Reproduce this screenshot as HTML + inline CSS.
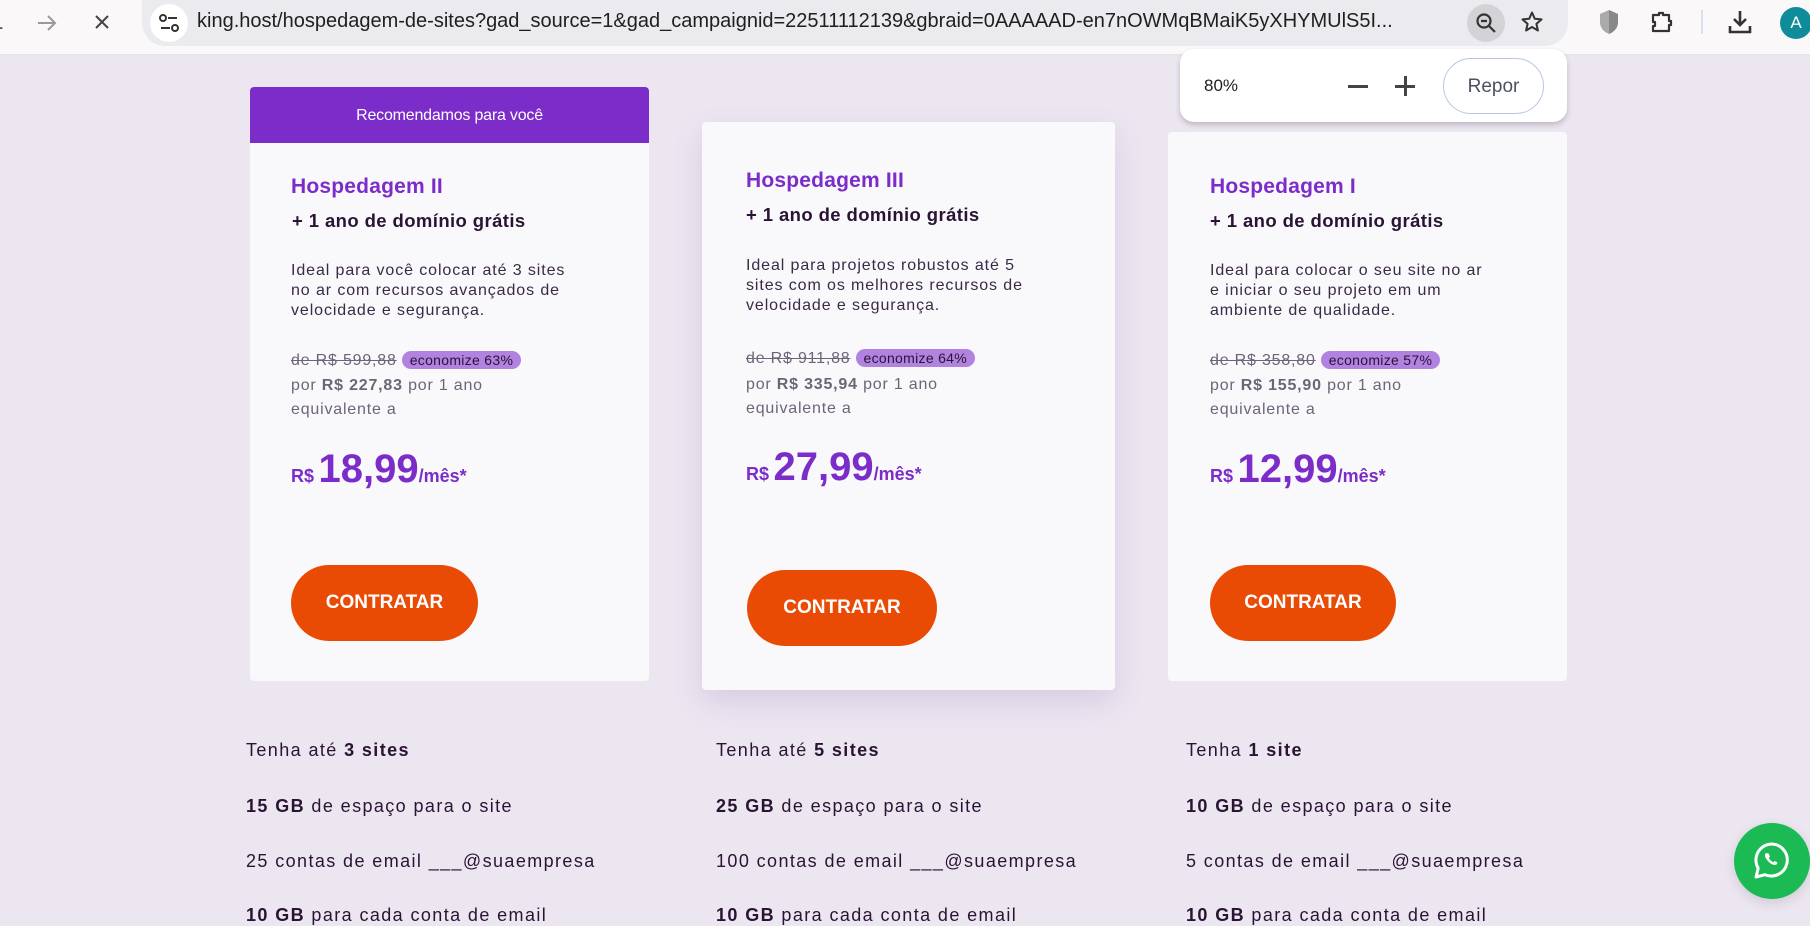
<!DOCTYPE html>
<html><head><meta charset="utf-8"><style>
*{margin:0;padding:0;box-sizing:border-box}
body{width:1810px;height:922px;overflow:hidden;background:#ece6f1;font-family:"Liberation Sans",sans-serif;position:relative;color:#2a1433}
.a{position:absolute;white-space:nowrap}
.tb{position:absolute;left:0;top:0;width:1810px;height:56px;background:#fbf8fa;border-bottom:2px solid #e9e4ea}
.addr{position:absolute;left:142px;top:0;width:1426px;height:46px;background:#ebebef;border-radius:0 0 23px 23px}
.card{position:absolute;background:#f9f9fc;border-radius:4px}
.t{color:#7b2cc9;font-weight:bold;font-size:21px;letter-spacing:.2px}
.s{font-weight:bold;font-size:18.5px;color:#2a1433;letter-spacing:.4px}
.d{font-size:16px;line-height:20px;color:#3a2a45;letter-spacing:.9px}
.g{font-size:16px;color:#6e6477;letter-spacing:.8px}
.pill{display:inline-block;background:#b282e0;color:#2a1433;border-radius:10px;padding:1px 8px;font-size:14px;margin-left:5px;letter-spacing:.3px}
.p{color:#7b2cc9;font-weight:bold}
.btn{position:absolute;background:#e94b05;color:#fff;font-weight:bold;font-size:19px;border-radius:40px;display:flex;align-items:center;justify-content:center}
.f{font-size:18px;color:#2a1433;letter-spacing:1.4px}
</style></head><body>
<div class="tb">
 <div class="a" style="left:-4px;top:14px;font-size:22px;color:#555">-</div>
 <svg class="a" style="left:36px;top:14px" width="22" height="18" viewBox="0 0 22 18"><path d="M2 9H19M12 2l7 7-7 7" stroke="#999" stroke-width="2" fill="none"/></svg>
 <svg class="a" style="left:93px;top:13px" width="18" height="18" viewBox="0 0 18 18"><path d="M3 3l12 12M15 3L3 15" stroke="#444" stroke-width="2"/></svg>
 <div class="addr">
  <div class="a" style="left:8px;top:4px;width:38px;height:38px;border-radius:19px;background:#fff"></div>
  <svg class="a" style="left:16px;top:12px" width="22" height="22" viewBox="0 0 22 22"><circle cx="5" cy="6" r="3" stroke="#333" stroke-width="2" fill="none"/><path d="M10 6h9M3 16h9" stroke="#333" stroke-width="2"/><circle cx="17" cy="16" r="3" stroke="#333" stroke-width="2" fill="none"/></svg>
  <div class="a" style="left:55px;top:10px;font-size:20px;color:#1f1f1f">king.host/hospedagem-de-sites?gad_source=1&amp;gad_campaignid=22511112139&amp;gbraid=0AAAAAD-en7nOWMqBMaiK5yXHYMUlS5I...</div>
  <div class="a" style="left:1325px;top:4px;width:38px;height:38px;border-radius:19px;background:#d3d3d7"></div>
  <svg class="a" style="left:1332px;top:11px" width="24" height="24" viewBox="0 0 24 24"><circle cx="10" cy="10" r="6.5" stroke="#333" stroke-width="2.2" fill="none"/><path d="M7 10h6M15 15l6 6" stroke="#333" stroke-width="2.2"/></svg>
  <svg class="a" style="left:1378px;top:10px" width="24" height="24" viewBox="0 0 24 24"><path d="M12 2.5l2.8 6.3 6.7.6-5.1 4.5 1.5 6.6L12 17l-5.9 3.5 1.5-6.6-5.1-4.5 6.7-.6z" stroke="#333" stroke-width="2" fill="none" stroke-linejoin="round"/></svg>
 </div>
 <svg class="a" style="left:1598px;top:9px" width="22" height="26" viewBox="0 0 22 26"><path d="M11 1L2 5v8c0 6 4 10 9 12 5-2 9-6 9-12V5z" fill="#aaa"/><path d="M11 1v24c5-2 9-6 9-12V5z" fill="#888"/></svg>
 <svg class="a" style="left:1650px;top:10px" width="24" height="24" viewBox="0 0 24 24"><path d="M3 5h6V3h4v2h6v6h2v4h-2v6H3v-5h2v-4H3z" stroke="#333" stroke-width="2.2" fill="none" stroke-linejoin="round"/></svg>
 <div class="a" style="left:1701px;top:10px;width:2px;height:24px;background:#d7dff0"></div>
 <svg class="a" style="left:1727px;top:9px" width="26" height="26" viewBox="0 0 26 26"><path d="M13 2v14M7 10l6 6 6-6M3 17v6h20v-6" stroke="#333" stroke-width="2.6" fill="none"/></svg>
 <div class="a" style="left:1780px;top:7px;width:32px;height:32px;border-radius:16px;background:#0f8b99;color:#fff;font-size:17px;line-height:32px;text-align:center">A</div>
</div>

<!-- card 1 -->
<div class="card" style="left:250px;top:87px;width:399px;height:594px">
 <div style="height:56px;background:#7b2cc9;border-radius:4px 4px 0 0;color:#fff;font-size:16px;text-align:center;line-height:58px;letter-spacing:-.2px">Recomendamos para você</div>
</div>
<div class="a t" style="left:291px;top:175px">Hospedagem II</div>
<div class="a s" style="left:292px;top:210px">+ 1 ano de domínio grátis</div>
<div class="a d" style="left:291px;top:261px">Ideal para você colocar até 3 sites<br>no ar com recursos avançados de<br>velocidade e segurança.</div>
<div class="a g" style="left:291px;top:351px"><s>de R$ 599,88</s><span class="pill">economize 63%</span></div>
<div class="a g" style="left:291px;top:377px">por <b>R$ 227,83</b> por 1 ano</div>
<div class="a g" style="left:291px;top:401px">equivalente a</div>
<div class="a p" style="left:291px;top:447px"><span style="font-size:18px">R$</span> <span style="font-size:40px">18,99</span><span style="font-size:18px">/mês*</span></div>
<div class="btn" style="left:291px;top:565px;width:187px;height:76px">CONTRATAR</div>

<!-- card 2 -->
<div class="card" style="left:702px;top:122px;width:413px;height:568px;box-shadow:0 12px 30px rgba(120,90,160,.18)"></div>
<div class="a t" style="left:746px;top:169px">Hospedagem III</div>
<div class="a s" style="left:746px;top:204px">+ 1 ano de domínio grátis</div>
<div class="a d" style="left:746px;top:256px">Ideal para projetos robustos até 5<br>sites com os melhores recursos de<br>velocidade e segurança.</div>
<div class="a g" style="left:746px;top:349px"><s>de R$ 911,88</s><span class="pill">economize 64%</span></div>
<div class="a g" style="left:746px;top:376px">por <b>R$ 335,94</b> por 1 ano</div>
<div class="a g" style="left:746px;top:400px">equivalente a</div>
<div class="a p" style="left:746px;top:445px"><span style="font-size:18px">R$</span> <span style="font-size:40px">27,99</span><span style="font-size:18px">/mês*</span></div>
<div class="btn" style="left:747px;top:570px;width:190px;height:76px">CONTRATAR</div>

<!-- card 3 -->
<div class="card" style="left:1168px;top:132px;width:399px;height:549px"></div>
<div class="a t" style="left:1210px;top:175px">Hospedagem I</div>
<div class="a s" style="left:1210px;top:210px">+ 1 ano de domínio grátis</div>
<div class="a d" style="left:1210px;top:261px">Ideal para colocar o seu site no ar<br>e iniciar o seu projeto em um<br>ambiente de qualidade.</div>
<div class="a g" style="left:1210px;top:351px"><s>de R$ 358,80</s><span class="pill">economize 57%</span></div>
<div class="a g" style="left:1210px;top:377px">por <b>R$ 155,90</b> por 1 ano</div>
<div class="a g" style="left:1210px;top:401px">equivalente a</div>
<div class="a p" style="left:1210px;top:447px"><span style="font-size:18px">R$</span> <span style="font-size:40px">12,99</span><span style="font-size:18px">/mês*</span></div>
<div class="btn" style="left:1210px;top:565px;width:186px;height:76px">CONTRATAR</div>

<!-- zoom popup -->
<div class="a" style="left:1180px;top:49px;width:387px;height:73px;background:#fff;border-radius:14px;box-shadow:0 3px 6px rgba(0,0,0,.2)">
 <div class="a" style="left:24px;top:27px;font-size:17px;color:#1f1f1f">80%</div>
 <div class="a" style="left:168px;top:36px;width:20px;height:3px;background:#444"></div>
 <div class="a" style="left:215px;top:36px;width:20px;height:3px;background:#444"></div>
 <div class="a" style="left:223.5px;top:27px;width:3px;height:20px;background:#444"></div>
 <div class="a" style="left:263px;top:9px;width:101px;height:56px;border:1.5px solid #b7c6e4;border-radius:28px;color:#4a5260;font-size:19px;line-height:55px;text-align:center">Repor</div>
</div>

<!-- features -->
<div class="a f" style="left:246px;top:740px">Tenha até <b>3 sites</b></div>
<div class="a f" style="left:246px;top:796px"><b>15 GB</b> de espaço para o site</div>
<div class="a f" style="left:246px;top:851px">25 contas de email ___@suaempresa</div>
<div class="a f" style="left:246px;top:905px"><b>10 GB</b> para cada conta de email</div>
<div class="a f" style="left:716px;top:740px">Tenha até <b>5 sites</b></div>
<div class="a f" style="left:716px;top:796px"><b>25 GB</b> de espaço para o site</div>
<div class="a f" style="left:716px;top:851px">100 contas de email ___@suaempresa</div>
<div class="a f" style="left:716px;top:905px"><b>10 GB</b> para cada conta de email</div>
<div class="a f" style="left:1186px;top:740px">Tenha <b>1 site</b></div>
<div class="a f" style="left:1186px;top:796px"><b>10 GB</b> de espaço para o site</div>
<div class="a f" style="left:1186px;top:851px">5 contas de email ___@suaempresa</div>
<div class="a f" style="left:1186px;top:905px"><b>10 GB</b> para cada conta de email</div>

<!-- whatsapp -->
<div class="a" style="left:1734px;top:823px;width:76px;height:76px;border-radius:38px;background:#1bba54;box-shadow:0 4px 12px rgba(0,0,0,.12)">
 <svg class="a" style="left:17px;top:17px" width="42" height="42" viewBox="0 0 42 42"><path d="M21 4a16 16 0 0 0-13.8 24.2L5 37l9-2.3A16 16 0 1 0 21 4z" stroke="#fff" stroke-width="3" fill="none" stroke-linejoin="round"/><path d="M15 13c-1 1-1.5 2.5-.5 4.5 1.5 3 4 5.5 7 7 2 1 3.5.5 4.5-.5l.5-1.5-3-1.5-1.3 1.3c-2-1-3.5-2.5-4.5-4.5l1.3-1.3-1.5-3z" fill="#fff"/></svg>
</div>
</body></html>
